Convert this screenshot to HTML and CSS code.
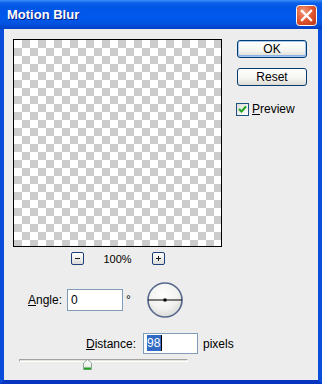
FILE: index.html
```html
<!DOCTYPE html>
<html lang="en">
<head>
    <meta charset="UTF-8">
    <title>Motion Blur</title>
    <link rel="stylesheet" href="styles.css">
</head>
<body>

<div class="window">
    <div class="titlebar">
        <span class="title">Motion Blur</span>
        <svg class="close" width="21" height="21" viewBox="0 0 21 21">
            <defs>
                <radialGradient id="cg" cx="35%" cy="30%" r="80%">
                    <stop offset="0" stop-color="#f09a7c"/>
                    <stop offset="0.55" stop-color="#e1572f"/>
                    <stop offset="1" stop-color="#c13e1c"/>
                </radialGradient>
            </defs>
            <rect x="0.5" y="0.5" width="20" height="20" rx="3" fill="url(#cg)" stroke="#ffffff"/>
            <path d="M6 6 L15 15 M15 6 L6 15" stroke="#ffffff" stroke-width="2.4" stroke-linecap="square"/>
        </svg>
    </div>

    <div class="frame">
        <div class="top">
            <div class="preview-col">
                <div class="preview"></div>
                <div class="zoom">
                    <span class="zbtn minus"></span>
                    <span class="zpct">100%</span>
                    <span class="zbtn plus"></span>
                </div>
            </div>
            <div class="buttons">
                <div class="btn default">OK</div>
                <div class="btn">Reset</div>
                <div class="check">
                    <span class="box">
                        <svg width="11" height="11" viewBox="0 0 11 11">
                            <path d="M2 5 L4.5 7.5 L9 2.5" fill="none" stroke="#21a121" stroke-width="2"/>
                        </svg>
                    </span>
                    <span><u>P</u>review</span>
                </div>
            </div>
        </div>

        <div class="row angle">
            <span class="lbl"><u>A</u>ngle:</span>
            <div class="field">0</div>
            <span class="deg">°</span>
            <svg class="dial" width="36" height="36" viewBox="0 0 36 36">
                <defs>
                    <radialGradient id="dg" cx="45%" cy="35%" r="70%">
                        <stop offset="0" stop-color="#ffffff"/>
                        <stop offset="0.6" stop-color="#f1f1ef"/>
                        <stop offset="1" stop-color="#d4d4d0"/>
                    </radialGradient>
                </defs>
                <circle cx="18" cy="18" r="17" fill="url(#dg)" stroke="#56688c" stroke-width="1.6"/>
                <line x1="1" y1="18" x2="35" y2="18" stroke="#000000" stroke-width="1.2"/>
                <rect x="16.5" y="16.5" width="3" height="3" fill="#000000"/>
            </svg>
        </div>

        <div class="row distance">
            <span class="lbl"><u>D</u>istance:</span>
            <div class="field"><span class="sel">98</span></div>
            <span class="unit">pixels</span>
        </div>

        <div class="slider">
            <div class="track"></div>
            <svg class="thumb" width="9" height="11" viewBox="0 0 9 11">
                <defs>
                    <linearGradient id="tg" x1="0" y1="0" x2="0" y2="1">
                        <stop offset="0" stop-color="#ffffff"/>
                        <stop offset="1" stop-color="#e4e4de"/>
                    </linearGradient>
                </defs>
                <path d="M0.5 4 L4.5 0.5 L8.5 4 L8.5 10.5 L0.5 10.5 Z" fill="url(#tg)" stroke="#8fa69a"/>
                <line x1="1" y1="9.5" x2="8" y2="9.5" stroke="#21a121" stroke-width="2"/>
            </svg>
        </div>
    </div>
</div>

</body>
</html>
```

FILE: styles.css
```css
body {
    margin: 0;
    font-family: "Liberation Sans", Arial, sans-serif;
    font-size: 12px;
    color: #000;
}
.window {
    width: 322px;
    height: 384px;
    display: flex;
    flex-direction: column;
}
.titlebar {
    height: 29px;
    flex: none;
    display: flex;
    align-items: center;
    justify-content: space-between;
    padding: 0 5px 0 7px;
    box-sizing: border-box;
    background: linear-gradient(to bottom, #3d8ef8 0, #0b60ea 3px, #0056e6 8px, #0059ed 18px, #0252de 24px, #003fc4 29px);
}
.title {
    color: #fff;
    font-weight: bold;
    font-size: 13px;
    text-shadow: 1px 1px 0 #0a1f8a;
}
.close {
    align-self: flex-start;
    margin-top: 5px;
}
.frame {
    flex: 1;
    background: #ededed;
    border-left: 4px solid #0a4ddb;
    border-right: 4px solid #0a4ddb;
    border-bottom: 4px solid #0834c2;
}
.top {
    display: flex;
    padding: 10px 0 0 9px;
    gap: 15px;
}
.preview-col {
    width: 209px;
}
.preview {
    width: 209px;
    height: 208px;
    box-sizing: border-box;
    border: 1px solid #000;
    background: repeating-conic-gradient(#cccccc 0 25%, #ffffff 0 50%) 0 0 / 16px 16px;
}
.zoom {
    display: flex;
    justify-content: center;
    align-items: center;
    margin-top: 5px;
    height: 13px;
}
.zpct {
    width: 68px;
    text-align: center;
    font-size: 11px;
}
.zbtn {
    width: 13px;
    height: 13px;
    box-sizing: border-box;
    border: 1px solid #1d3f78;
    border-radius: 2px;
    background: linear-gradient(to bottom, #ffffff, #dcdcd8);
    position: relative;
}
.zbtn::before,
.plus::after {
    content: "";
    position: absolute;
    left: 3px;
    top: 5px;
    width: 5px;
    height: 1px;
    background: #1a1a1a;
}
.plus::after {
    left: 5px;
    top: 3px;
    width: 1px;
    height: 5px;
}
.buttons {
    width: 70px;
    padding-top: 1px;
    display: flex;
    flex-direction: column;
}
.btn {
    height: 18px;
    box-sizing: border-box;
    border: 1px solid #003c74;
    border-radius: 3px;
    background: linear-gradient(to bottom, #ffffff 0, #f4f4f0 60%, #dcdad2 100%);
    text-align: center;
    line-height: 16px;
}
.btn.default {
    box-shadow: inset 0 0 0 1px #a9c6f0, inset 0 -1px 0 1px #8cb0e8;
}
.btn + .btn {
    margin-top: 10px;
}
.check {
    margin: 16px 0 0 -1px;
    display: flex;
    align-items: center;
    gap: 3px;
}
.box {
    width: 13px;
    height: 13px;
    box-sizing: border-box;
    border: 1px solid #1c5180;
    background: linear-gradient(135deg, #dcdcd6, #ffffff);
    display: flex;
}
.row {
    display: flex;
    align-items: center;
}
.lbl {
    box-sizing: border-box;
    text-align: right;
    padding-right: 5px;
}
.field {
    box-sizing: border-box;
    border: 1px solid #7f9db9;
    background: #fff;
    padding-left: 3px;
}
.angle {
    margin-top: 17px;
    height: 36px;
}
.angle .lbl {
    width: 63px;
}
.angle .field {
    width: 56px;
    height: 22px;
    line-height: 20px;
}
.deg {
    width: 21px;
    margin-left: 3px;
}
.distance {
    margin-top: 15px;
    height: 21px;
}
.distance .lbl {
    width: 139px;
    padding-right: 7px;
}
.distance .field {
    width: 55px;
    height: 21px;
    line-height: 17px;
    padding-top: 1px;
}
.sel {
    display: inline-block;
    background: #316ac5;
    color: #fff;
    padding-right: 1px;
    line-height: 16px;
    border-right: 1px solid #000;
}
.unit {
    margin-left: 5px;
}
.slider {
    position: relative;
    margin: 5px 0 0 15px;
    width: 169px;
    height: 11px;
}
.track {
    margin-top: 5px;
    height: 3px;
    box-sizing: border-box;
    border-top: 1px solid #a3a29c;
    border-bottom: 1px solid #ffffff;
    border-left: 1px solid #a3a29c;
    border-right: 1px solid #ffffff;
    background: #e4e3dc;
}
.thumb {
    position: absolute;
    left: 64px;
    top: 0;
}
```
